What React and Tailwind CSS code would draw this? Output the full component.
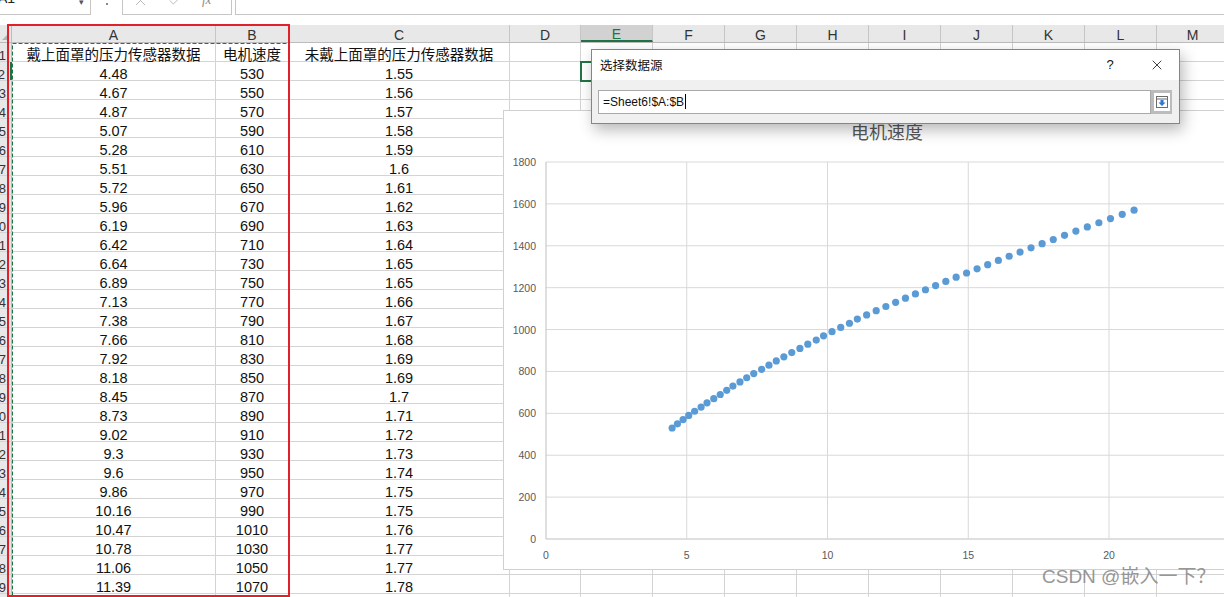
import React from "react";
import { X, Check } from "lucide-react";

const colA = [4.48, 4.67, 4.87, 5.07, 5.28, 5.51, 5.72, 5.96, 6.19, 6.42, 6.64, 6.89, 7.13, 7.38, 7.66, 7.92, 8.18, 8.45, 8.73, 9.02, 9.3, 9.6, 9.86, 10.16, 10.47, 10.78, 11.06, 11.39];
const colC = [1.55, 1.56, 1.57, 1.58, 1.59, 1.6, 1.61, 1.62, 1.63, 1.64, 1.65, 1.65, 1.66, 1.67, 1.68, 1.69, 1.69, 1.7, 1.71, 1.72, 1.73, 1.74, 1.75, 1.75, 1.76, 1.77, 1.77, 1.78];
const colB = colA.map((_, i) => 530 + 20 * i);

const restCols = ["D", "E", "F", "G", "H", "I", "J", "K", "L", "M"];

// chart points
const pts = colA.map((x, i) => [x, colB[i]]);
{
  let x = colA[colA.length - 1];
  for (let k = 0; k < 25; k++) {
    x += 0.34 + (0.08 * k) / 24;
    pts.push([x, 1090 + 20 * k]);
  }
}

const X0 = 42;
const SX = 28.15;
const Y0 = 428;
const SY = 377 / 1800;

const FONT = { fontFamily: '"Liberation Sans", "Noto Sans CJK SC", sans-serif' };

function Cell({ w, children, className = "" }) {
  return (
    <div
      className={`${w} shrink-0 h-full border-r border-[#d4d4d4] flex items-center justify-center pt-[7px] whitespace-nowrap ${className}`}
    >
      {children}
    </div>
  );
}

function Row({ num, a, b, c, rowSel }) {
  return (
    <div className="h-[19px] flex border-b border-[#d4d4d4] text-[14.5px] text-[#111]">
      <div
        className={`w-[12px] shrink-0 h-full flex items-center justify-end pt-[7px] pr-[5px] text-[13px] text-[#333] bg-[#e8e8e8] border-r whitespace-nowrap ${rowSel ? "border-r-2 border-[#217346] bg-[#d2d2d2]" : "border-[#bcbcbc]"}`}
      >
        {num}
      </div>
      <Cell w="w-[204px]">{a}</Cell>
      <Cell w="w-[73px]">{b}</Cell>
      <Cell w="w-[221px]">{c}</Cell>
      {restCols.map((k) => (
        <Cell key={k} w={k === "D" ? "w-[71px]" : "w-[72px]"} />
      ))}
    </div>
  );
}

function Chart() {
  const yTicks = [0, 200, 400, 600, 800, 1000, 1200, 1400, 1600, 1800];
  const xTicks = [0, 5, 10, 15, 20, 25];
  return (
    <div className="absolute left-[503px] top-[110px] w-[740px] h-[460px] bg-white border border-[#d0d0d0]">
      <svg width="740" height="460" style={FONT}>
        <text x="383" y="28" textAnchor="middle" fontSize="18" fill="#595959">
          电机速度
        </text>
        {yTicks.map((v) => (
          <line key={"h" + v} x1={X0} x2={740} y1={Y0 - v * SY} y2={Y0 - v * SY} stroke={v === 0 ? "#bfbfbf" : "#d9d9d9"} strokeWidth="1" />
        ))}
        {xTicks.map((t) => (
          <line key={"v" + t} x1={X0 + t * SX} x2={X0 + t * SX} y1={Y0 - 1800 * SY} y2={Y0} stroke={t === 0 ? "#bfbfbf" : "#d9d9d9"} strokeWidth="1" />
        ))}
        {yTicks.map((v) => (
          <text key={"yl" + v} x="32" y={Y0 - v * SY + 4} textAnchor="end" fontSize="10.5" fill="#595959">
            {v}
          </text>
        ))}
        {xTicks.slice(0, 5).map((t) => (
          <text key={"xl" + t} x={X0 + t * SX} y="448" textAnchor="middle" fontSize="10.5" fill="#595959">
            {t}
          </text>
        ))}
        {pts.map(([x, y], i) => (
          <circle key={i} cx={X0 + x * SX} cy={Y0 - y * SY} r="3.6" fill="#5b9bd5" />
        ))}
      </svg>
    </div>
  );
}

function Dialog() {
  return (
    <div className="absolute left-[591px] top-[49px] w-[589px] h-[75px] border border-[#858585] bg-[#f0f0f0] shadow-[3px_6px_14px_rgba(0,0,0,0.28)] flex flex-col">
      <div className="h-[30px] bg-white flex items-center pl-[8px] pr-[14px] text-[12.5px] text-[#111]" style={{ fontFamily: '"Noto Sans CJK SC", "Liberation Sans", sans-serif' }}>
        <span className="flex-1">选择数据源</span>
        <span className="w-[20px] text-center text-[13px] mr-[29px]" style={FONT}>?</span>
        <X size={16} strokeWidth={1.3} color="#222" />
      </div>
      <div className="flex-1 flex items-center pl-[6px] pr-[7px]">
        <div className="flex-1 h-[24px] bg-white border border-[#a9a9a9] flex items-center pl-[4px] text-[12px] text-[#111]" style={FONT}>
          =Sheet6!$A:$B
          <span className="w-[1px] h-[15px] bg-black ml-[1px]" />
        </div>
        <div className="w-[21px] h-[24px] bg-[#bcbcbc] flex items-center justify-center">
          <div className="w-[16px] h-[18px] bg-white flex items-center justify-center">
            <svg width="12" height="12" viewBox="0 0 12 12">
              <rect x="0.5" y="0.5" width="11" height="11" fill="white" stroke="#6d6d6d" />
              <line x1="1" y1="3" x2="11" y2="3" stroke="#6d6d6d" />
              <path d="M4.5 4 H7.5 V6.5 H9.5 L6 10 L2.5 6.5 H4.5 Z" fill="#2f78c8" />
            </svg>
          </div>
        </div>
      </div>
    </div>
  );
}

export default function App() {
  return (
    <div className="relative w-[1224px] h-[597px] overflow-hidden bg-white" style={FONT}>
      {/* formula bar */}
      <div className="h-[25px] flex items-start">
        <div className="h-[15px] w-[91px] shrink-0 border-r border-b border-[#c6c6c6] bg-white relative overflow-hidden flex items-start">
          <span className="text-[14px] text-[#222] -ml-[2px] -mt-[12px] leading-[20px]">A1</span>
          <span className="absolute left-[79px] -top-[4px] text-[9px] text-[#555]">▾</span>
        </div>
        <div className="w-[31px] shrink-0 h-[15px] flex justify-center overflow-hidden">
          <div className="flex flex-col gap-[3px] -mt-[2px]">
            <span className="w-[2px] h-[2px] bg-[#8a8a8a]" />
            <span className="w-[2px] h-[2px] bg-[#8a8a8a]" />
          </div>
        </div>
        <div className="h-[15px] w-[110px] shrink-0 border-l border-r border-b border-[#c6c6c6] bg-white flex items-start overflow-hidden">
          <div className="flex items-center -mt-[9px] pl-[9px] gap-[18px]">
            <X size={17} strokeWidth={1.3} color="#b5b5b5" />
            <Check size={17} strokeWidth={1.3} color="#b5b5b5" />
            <span className="text-[13px] italic text-[#8a8a8a] -mt-[1px]" style={{ fontFamily: '"Liberation Serif", serif' }}>fx</span>
          </div>
        </div>
        <div className="w-[3px] shrink-0" />
        <div className="h-[15px] flex-1 border-l border-b border-[#c6c6c6] bg-white" />
      </div>

      {/* column headers */}
      <div className="h-[18px] flex bg-[#e8e8e8] border-b border-[#bcbcbc] text-[14px] text-[#333]">
        <div className="w-[12px] shrink-0 h-full border-r border-[#bcbcbc] relative">
          <div className="absolute right-[2px] bottom-[2px] w-0 h-0 border-l-[7px] border-l-transparent border-b-[7px] border-b-[#b4b4b4]" />
        </div>
        <div className="w-[204px] shrink-0 h-full border-r border-[#c6c6c6] flex items-center justify-center pt-[3px]">A</div>
        <div className="w-[73px] shrink-0 h-full border-r border-[#c6c6c6] flex items-center justify-center pt-[3px]">B</div>
        <div className="w-[221px] shrink-0 h-full border-r border-[#c6c6c6] flex items-center justify-center pt-[3px]">C</div>
        {restCols.map((k) => (
          <div
            key={k}
            className={`${k === "D" ? "w-[71px]" : "w-[72px]"} shrink-0 h-full border-r border-[#c6c6c6] flex items-center justify-center pt-[3px] ${k === "E" ? "bg-[#d2d2d2] text-[#217346] border-b-2 border-b-[#217346]" : ""}`}
          >
            {k}
          </div>
        ))}
      </div>

      {/* rows */}
      <Row num="1" a="戴上面罩的压力传感器数据" b="电机速度" c="未戴上面罩的压力传感器数据" />
      {colA.map((a, i) => (
        <Row key={i} num={String(i + 2)} a={a} b={colB[i]} c={colC[i]} rowSel={i === 0} />
      ))}
      <Row num="30" a="" b="" c="" />

      {/* selection on E2 */}
      <div className="absolute left-[580px] top-[61px] w-[74px] h-[21px] border-2 border-[#217346]" />

      {/* marching ants around A:B */}
      <svg className="absolute left-[12px] top-[43px]" width="277" height="553">
        <rect x="0.5" y="0.5" width="276" height="552" fill="none" stroke="#217346" strokeWidth="1" strokeDasharray="4 2" />
      </svg>
      {/* red highlight */}
      <div className="absolute left-[7px] top-[24px] w-[283px] h-[573px] border-2 border-[#e3202a]" />

      <Chart />
      <Dialog />

      {/* watermark */}
      <div
        className="absolute left-[1042px] top-[565px] text-[19px] text-[#8c8c8c] opacity-90 whitespace-nowrap leading-[24px]"
        style={{ fontFamily: '"Liberation Sans", "Noto Sans CJK SC", sans-serif' }}
      >
        CSDN @嵌入一下？
      </div>
    </div>
  );
}
